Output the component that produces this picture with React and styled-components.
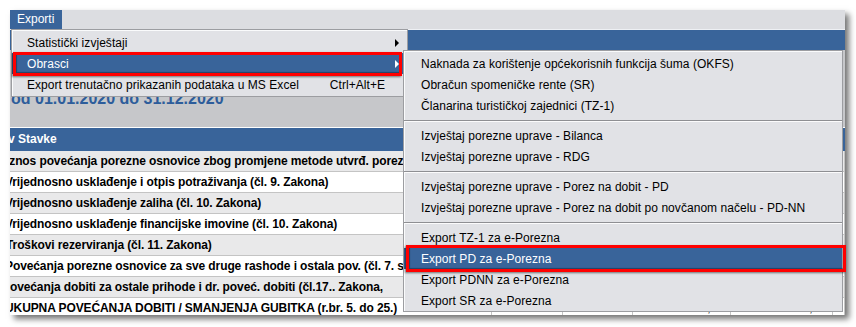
import React from 'react';
import styled, { createGlobalStyle, css } from 'styled-components';

const Global = createGlobalStyle`
  html, body { margin: 0; padding: 0; background: #ffffff; }
  body { font-family: "Liberation Sans", Arial, sans-serif; font-size: 12px; color: #000; }
`;

const BLUE = '#39649a';

const Stage = styled.div`
  width: 856px;
  height: 327px;
  box-sizing: border-box;
  padding: 10px 0 0 10px;
  background: #fff;
  overflow: hidden;
`;

const Window = styled.div`
  position: relative;
  width: 835px;
  height: 305px;
  display: flex;
  flex-direction: column;
  box-shadow: 4px 4px 6px rgba(0, 0, 0, 0.55);
`;

const MenuBar = styled.div`
  height: 19px;
  flex-shrink: 0;
  display: flex;
  background: #dcdde1;
`;

const MenuTitle = styled.div`
  padding: 0 8px 0 7px;
  line-height: 19px;
  color: ${p => (p.$open ? '#fff' : '#000')};
  background: ${p => (p.$open ? BLUE : 'transparent')};
`;

const Body = styled.div`
  flex: 1;
  overflow: hidden;
  display: flex;
  flex-direction: column;
  background: #fff;
`;

const TitleStrip = styled.div`
  height: 20px;
  flex-shrink: 0;
  border-top: 1px solid #eef0f4;
  background: ${BLUE};
`;

const InfoPanel = styled.div`
  height: 78px;
  flex-shrink: 0;
  box-sizing: border-box;
  display: flex;
  align-items: flex-end;
  padding: 0 0 19px 1px;
  background: #c6c7ca;
  border-bottom: 1px solid #fdfdfd;
`;

const DateText = styled.div`
  font-size: 16px;
  line-height: 18px;
  font-weight: 700;
  color: #2d5d9b;
`;

const TableHeader = styled.div`
  height: 23px;
  flex-shrink: 0;
  line-height: 23px;
  background: ${BLUE};
  color: #fff;
  font-weight: 700;
  white-space: nowrap;
  overflow: hidden;
`;

const Row = styled.div`
  display: grid;
  grid-template-columns: 482px 71px 70px 98px 102px 12px;
  height: 21px;
  flex-shrink: 0;
  box-sizing: border-box;
  border-bottom: 1px solid #c4c4c4;
  background: ${p => (p.$alt ? '#e9e9ea' : '#ffffff')};
`;

const Cell = styled.div`
  border-right: 1px solid #c4c4c4;
  overflow: hidden;
  white-space: nowrap;
  line-height: 20px;
  font-weight: ${p => (p.$num ? 400 : 700)};
  letter-spacing: ${p => (p.$num ? '0' : '-0.1px')};
  text-align: ${p => (p.$num ? 'right' : 'left')};
  padding-right: ${p => (p.$num ? '6px' : '0')};
`;

const Clipped = styled.span`
  display: inline-block;
  margin-left: ${p => p.$shift || 0}px;
`;

const Menu = styled.div`
  position: absolute;
  left: ${p => p.$left}px;
  top: ${p => p.$top}px;
  width: ${p => p.$width}px;
  z-index: ${p => p.$z};
  box-sizing: border-box;
  padding: 2px 0 ${p => p.$bottom}px;
  background: #e1e2e6;
  border: 1px solid #9c9da1;
  box-shadow: inset 1px 1px 0 #fafbfc;
`;

const Item = styled.div`
  position: relative;
  display: flex;
  align-items: center;
  height: 21px;
  padding: 0 8px 0 ${p => p.$indent}px;
  white-space: nowrap;
  letter-spacing: 0.05px;
  color: ${p => (p.$active ? '#fff' : '#000')};
  background: ${p => (p.$active ? BLUE : 'transparent')};
  ${p =>
    p.$mark &&
    css`
      &::after {
        content: '';
        position: absolute;
        inset: ${p.$mark};
        border: 3px solid #ff0000;
        box-shadow: -1px 1px 2px rgba(0, 0, 0, 0.5), inset 1px -1px 1px rgba(0, 0, 0, 0.35);
        pointer-events: none;
      }
    `}
`;

const Label = styled.span`
  flex: 1;
`;

const Accel = styled.span`
  margin-right: 14px;
`;

const Arrow = styled.span`
  width: 0;
  height: 0;
  border-top: 4px solid transparent;
  border-bottom: 4px solid transparent;
  border-left: 4px solid currentColor;
`;

const Separator = styled.div`
  height: 1px;
  margin: 4px 0 3px;
  background: #8e8f93;
  border-bottom: 1px solid #fbfbfc;
`;

const rows = [
  { text: 'Iznos povećanja porezne osnovice zbog promjene metode utvrđ. poreza', shift: -4 },
  { text: 'Vrijednosno usklađenje i otpis potraživanja (čl. 9. Zakona)', shift: -5 },
  { text: 'Vrijednosno usklađenje zaliha (čl. 10. Zakona)', shift: -5 },
  { text: 'Vrijednosno usklađenje financijske imovine (čl. 10. Zakona)', shift: -5 },
  { text: 'Troškovi rezerviranja (čl. 11. Zakona)', shift: -4 },
  { text: 'Povećanja porezne osnovice za sve druge rashode i ostala pov. (čl. 7. st.', shift: -5 },
  { text: 'Povećanja dobiti za ostale prihode i dr. poveć. dobiti (čl.17.. Zakona,', shift: -8 },
  { text: 'UKUPNA POVEĆANJA DOBITI / SMANJENJA GUBITKA (r.br. 5. do 25.)', shift: -5, totals: true },
];

const subItems = [
  'Naknada za korištenje općekorisnih funkcija šuma (OKFS)',
  'Obračun spomeničke rente (SR)',
  'Članarina turističkoj zajednici (TZ-1)',
  '-',
  'Izvještaj porezne uprave - Bilanca',
  'Izvještaj porezne uprave - RDG',
  '-',
  'Izvještaj porezne uprave - Porez na dobit - PD',
  'Izvještaj porezne uprave - Porez na dobit po novčanom načelu - PD-NN',
  '-',
  'Export TZ-1 za e-Porezna',
  'Export PD za e-Porezna',
  'Export PDNN za e-Porezna',
  'Export SR za e-Porezna',
];

export default function App() {
  return (
    <>
      <Global />
      <Stage>
        <Window>
          <MenuBar>
            <MenuTitle $open>Exporti</MenuTitle>
          </MenuBar>
          <Body>
            <TitleStrip />
            <InfoPanel>
              <DateText>od 01.01.2020 do 31.12.2020</DateText>
            </InfoPanel>
            <TableHeader>
              <Clipped $shift={-2}>v Stavke</Clipped>
            </TableHeader>
            {rows.map((r, i) => (
              <Row key={i} $alt={i % 2 === 0}>
                <Cell>
                  <Clipped $shift={r.shift}>{r.text}</Clipped>
                </Cell>
                <Cell $num />
                <Cell $num />
                <Cell $num>{r.totals ? '0,00' : ''}</Cell>
                <Cell $num>{r.totals ? '0,00' : ''}</Cell>
                <Cell $num />
              </Row>
            ))}
          </Body>

          <Menu $left={1} $top={19} $width={397} $z={2} $bottom={1}>
            <Item $indent={15}>
              <Label>Statistički izvještaji</Label>
              <Arrow />
            </Item>
            <Item $indent={15} $active $mark="-1px 5px -2px 1px">
              <Label>Obrasci</Label>
              <Arrow />
            </Item>
            <Item $indent={15}>
              <Label>Export trenutačno prikazanih podataka u MS Excel</Label>
              <Accel>Ctrl+Alt+E</Accel>
            </Item>
          </Menu>

          <Menu $left={393} $top={40} $width={440} $z={3} $bottom={0}>
            {subItems.map((t, i) =>
              t === '-' ? (
                <Separator key={i} />
              ) : t === 'Export PD za e-Porezna' ? (
                <Item key={i} $indent={17} $active $mark="-3px -4px -3px 2px">
                  <Label>{t}</Label>
                </Item>
              ) : (
                <Item key={i} $indent={17}>
                  <Label>{t}</Label>
                </Item>
              )
            )}
          </Menu>
        </Window>
      </Stage>
    </>
  );
}
